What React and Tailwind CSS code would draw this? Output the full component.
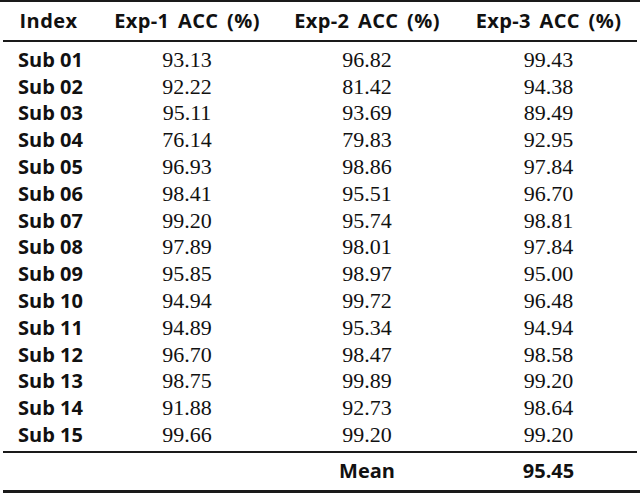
const rows = [
  ["Sub 01", "93.13", "96.82", "99.43"],
  ["Sub 02", "92.22", "81.42", "94.38"],
  ["Sub 03", "95.11", "93.69", "89.49"],
  ["Sub 04", "76.14", "79.83", "92.95"],
  ["Sub 05", "96.93", "98.86", "97.84"],
  ["Sub 06", "98.41", "95.51", "96.70"],
  ["Sub 07", "99.20", "95.74", "98.81"],
  ["Sub 08", "97.89", "98.01", "97.84"],
  ["Sub 09", "95.85", "98.97", "95.00"],
  ["Sub 10", "94.94", "99.72", "96.48"],
  ["Sub 11", "94.89", "95.34", "94.94"],
  ["Sub 12", "96.70", "98.47", "98.58"],
  ["Sub 13", "98.75", "99.89", "99.20"],
  ["Sub 14", "91.88", "92.73", "98.64"],
  ["Sub 15", "99.66", "99.20", "99.20"],
];

const sans = "font-['Open_Sans',sans-serif] font-bold";
const serif = "font-['Liberation_Serif',serif]";
const cols = "grid grid-cols-[97px_180px_180px_1fr]";

export default function App() {
  return (
    <div className="w-[640px] h-[493px] bg-white text-[#111] overflow-hidden">
      <div className="h-[2px] bg-[#1a1a1a]" />
      <div className={`${cols} h-[38px] items-center text-[20px] tracking-[0.4px] [word-spacing:3px] ${sans}`}>
        <div className="text-center">Index</div>
        <div className="text-center">Exp-1 ACC (%)</div>
        <div className="text-center">Exp-2 ACC (%)</div>
        <div className="text-center">Exp-3 ACC (%)</div>
      </div>
      <div className="ml-[3px] mr-[3px] h-[1.5px] bg-[#1a1a1a]" />
      <div className="pt-[5px] pb-[3px]">
        {rows.map((r) => (
          <div key={r[0]} className={`${cols} h-[26.8px] items-center`}>
            <div className={`pl-[18px] text-[20px] leading-none ${sans}`}>{r[0]}</div>
            <div className={`text-center text-[22px] leading-none ${serif}`}>{r[1]}</div>
            <div className={`text-center text-[22px] leading-none ${serif}`}>{r[2]}</div>
            <div className={`text-center text-[22px] leading-none ${serif}`}>{r[3]}</div>
          </div>
        ))}
      </div>
      <div className="ml-[3px] mr-[3px] h-[1.5px] bg-[#1a1a1a]" />
      <div className={`${cols} h-[37px] items-center text-[20px] ${sans}`}>
        <div />
        <div />
        <div className="text-center">Mean</div>
        <div className="text-center">95.45</div>
      </div>
      <div className="ml-[3px] h-[3px] bg-[#1a1a1a]" />
    </div>
  );
}
